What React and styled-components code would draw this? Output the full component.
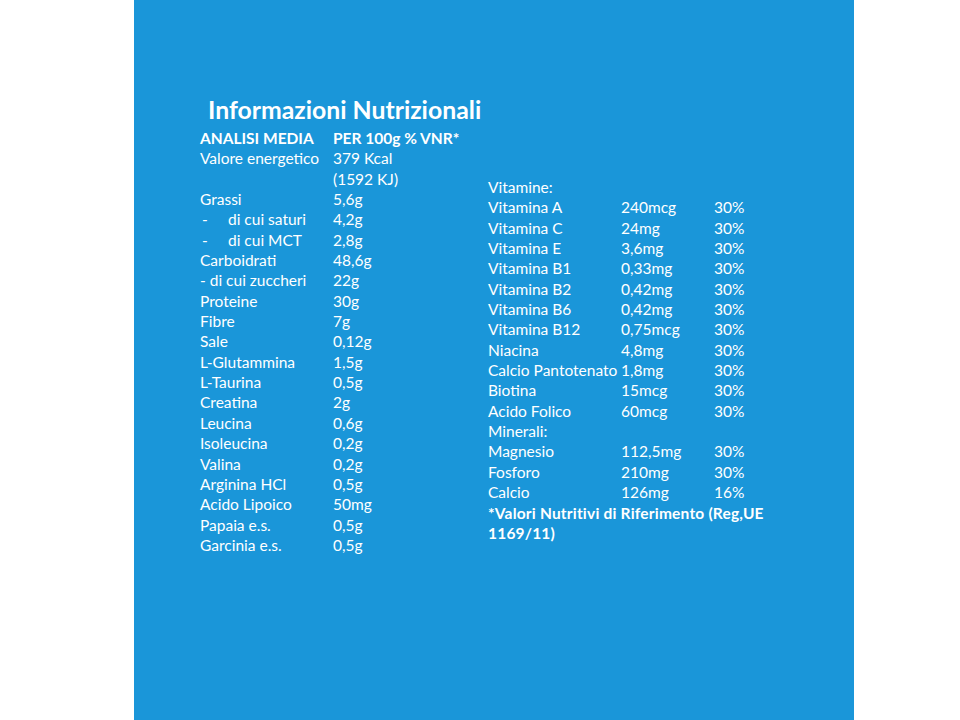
import React from 'react';
import styled, { createGlobalStyle } from 'styled-components';

const GlobalStyle = createGlobalStyle`
  html, body {
    margin: 0;
    padding: 0;
    background: #ffffff;
  }
`;

const Page = styled.div`
  width: 960px;
  height: 720px;
  background: #ffffff;
  display: flex;
`;

const Panel = styled.div`
  margin-left: 134px;
  width: 720px;
  height: 720px;
  background: #1a96d9;
  color: #ffffff;
  font-family: Lato, 'Open Sans', sans-serif;
  font-size: 15.5px;
  box-sizing: border-box;
  padding: 95px 0 0 66px;
  display: flex;
`;

const LeftColumn = styled.div`
  width: 288px;
`;

const RightColumn = styled.div`
  padding-top: 82px;
  width: 310px;
`;

const Title = styled.h1`
  margin: 0 0 3px 8px;
  font-size: 24.8px;
  font-weight: 700;
  line-height: 30px;
  white-space: nowrap;
`;

const Table = styled.div`
  display: grid;
  grid-template-columns: ${(p) => p.$cols};
  grid-auto-rows: 20.35px;
  line-height: 20.35px;
  white-space: nowrap;
`;

const Cell = styled.div`
  font-weight: ${(p) => (p.$bold ? 700 : 400)};
  grid-column: ${(p) => (p.$span ? '1 / -1' : 'auto')};
`;

const Dash = styled.span`
  display: inline-block;
  width: ${(p) => p.$w}px;
  padding-left: ${(p) => p.$pad || 0}px;
`;

const Note = styled.div`
  font-weight: 700;
  line-height: 20.35px;
  letter-spacing: 0.2px;
  width: 300px;
`;

const left = [
  ['Valore energetico', '379 Kcal'],
  ['', '(1592 KJ)'],
  ['Grassi', '5,6g'],
  ['sub:di cui saturi', '4,2g'],
  ['sub:di cui MCT', '2,8g'],
  ['Carboidrati', '48,6g'],
  ['- di cui zuccheri', '22g'],
  ['Proteine', '30g'],
  ['Fibre', '7g'],
  ['Sale', '0,12g'],
  ['L-Glutammina', '1,5g'],
  ['L-Taurina', '0,5g'],
  ['Creatina', '2g'],
  ['Leucina', '0,6g'],
  ['Isoleucina', '0,2g'],
  ['Valina', '0,2g'],
  ['Arginina HCl', '0,5g'],
  ['Acido Lipoico', '50mg'],
  ['Papaia e.s.', '0,5g'],
  ['Garcinia e.s.', '0,5g'],
];

const right = [
  ['Vitamine:'],
  ['Vitamina A', '240mcg', '30%'],
  ['Vitamina C', '24mg', '30%'],
  ['Vitamina E', '3,6mg', '30%'],
  ['Vitamina B1', '0,33mg', '30%'],
  ['Vitamina B2', '0,42mg', '30%'],
  ['Vitamina B6', '0,42mg', '30%'],
  ['Vitamina B12', '0,75mcg', '30%'],
  ['Niacina', '4,8mg', '30%'],
  ['Calcio Pantotenato', '1,8mg', '30%'],
  ['Biotina', '15mcg', '30%'],
  ['Acido Folico', '60mcg', '30%'],
  ['Minerali:'],
  ['Magnesio', '112,5mg', '30%'],
  ['Fosforo', '210mg', '30%'],
  ['Calcio', '126mg', '16%'],
];

function Label({ text }) {
  if (text.startsWith('sub:')) {
    return (
      <Cell>
        <Dash $w={26} $pad={2}>-</Dash>
        {text.slice(4)}
      </Cell>
    );
  }
  return <Cell>{text}</Cell>;
}

export default function App() {
  return (
    <Page>
      <GlobalStyle />
      <Panel>
        <LeftColumn>
          <Title>Informazioni Nutrizionali</Title>
          <Table $cols="133px auto">
            <Cell $bold>ANALISI MEDIA</Cell>
            <Cell $bold>PER 100g % VNR*</Cell>
            {left.map(([k, v], i) => (
              <React.Fragment key={i}>
                <Label text={k} />
                <Cell>{v}</Cell>
              </React.Fragment>
            ))}
          </Table>
        </LeftColumn>
        <RightColumn>
          <Table $cols="133px 93px auto">
            {right.map((r, i) =>
              r.length === 1 ? (
                <Cell key={i} $span>{r[0]}</Cell>
              ) : (
                <React.Fragment key={i}>
                  <Cell>{r[0]}</Cell>
                  <Cell>{r[1]}</Cell>
                  <Cell>{r[2]}</Cell>
                </React.Fragment>
              )
            )}
          </Table>
          <Note>*Valori Nutritivi di Riferimento (Reg,UE 1169/11)</Note>
        </RightColumn>
      </Panel>
    </Page>
  );
}
